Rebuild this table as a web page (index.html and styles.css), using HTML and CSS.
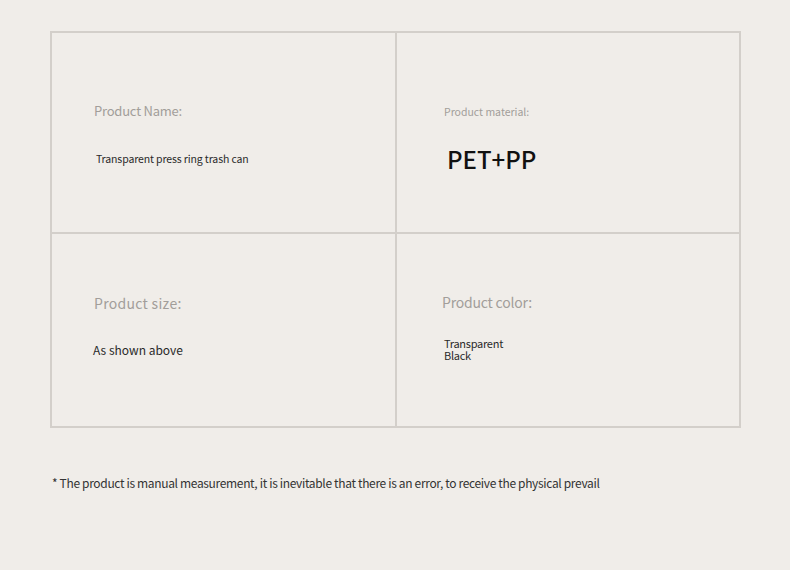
FILE: index.html
```html
<!DOCTYPE html>
<html lang="en">
<head>
<meta charset="utf-8">
<title>Product parameters</title>
<link rel="stylesheet" href="styles.css">
</head>
<body>
<div class="page">
  <div class="spec-grid">
    <div class="cell cell-name">
      <div class="label">Product Name:</div>
      <div class="value">Transparent press ring trash can</div>
    </div>
    <div class="cell cell-material">
      <div class="label">Product material:</div>
      <div class="value">PET+PP</div>
    </div>
    <div class="cell cell-size">
      <div class="label">Product size:</div>
      <div class="value">As shown above</div>
    </div>
    <div class="cell cell-color">
      <div class="label">Product color:</div>
      <div class="value">Transparent<br>Black</div>
    </div>
  </div>
  <p class="note">* The product is manual measurement, it is inevitable that there is an error, to receive the physical prevail</p>
</div>
</body>
</html>
```

FILE: styles.css
```css
html, body {
  margin: 0;
  padding: 0;
  background: #f0ede9;
}

body {
  font-family: "Noto Sans CJK SC", "Noto Sans", sans-serif;
  width: 790px;
  height: 570px;
  overflow: hidden;
}

.page {
  padding: 31px 0 0 50px;
}

.spec-grid {
  width: 691px;
  height: 397px;
  box-sizing: border-box;
  display: grid;
  grid-template-columns: 343px 342px;
  grid-template-rows: 199px 192px;
  gap: 2px;
  padding: 2px;
  background: #d3cfca;
}

.cell {
  background: #f0ede9;
  display: flex;
  flex-direction: column;
  align-items: flex-start;
}

.label {
  color: #a29e9a;
}

.value {
  color: #2a2a2a;
}

/* Product name */
.cell-name {
  padding: 70px 0 0 42px;
}
.cell-name .label {
  font-size: 13px;
  line-height: 16px;
  letter-spacing: -0.22px;
}
.cell-name .value {
  font-size: 10.5px;
  line-height: 14px;
  letter-spacing: -0.12px;
  margin: 33px 0 0 2px;
}

/* Material */
.cell-material {
  padding: 72px 0 0 47px;
}
.cell-material .label {
  font-size: 10.5px;
  line-height: 14px;
}
.cell-material .value {
  font-size: 24px;
  line-height: 28px;
  margin: 26px 0 0 3px;
  color: #111;
  font-weight: 500;
}

/* Size */
.cell-size {
  padding: 60px 0 0 42px;
}
.cell-size .label {
  font-size: 14px;
  line-height: 18px;
  letter-spacing: 0.3px;
}
.cell-size .value {
  font-size: 12px;
  line-height: 16px;
  margin: 30px 0 0 -1px;
}

/* Color */
.cell-color {
  padding: 59px 0 0 45px;
}
.cell-color .label {
  font-size: 14px;
  line-height: 18px;
  letter-spacing: -0.2px;
}
.cell-color .value {
  font-size: 11px;
  line-height: 12px;
  letter-spacing: -0.27px;
  margin: 26px 0 0 2px;
}

.note {
  margin: 47px 0 0 2px;
  font-size: 12px;
  line-height: 16px;
  letter-spacing: -0.34px;
  color: #333;
}
```
